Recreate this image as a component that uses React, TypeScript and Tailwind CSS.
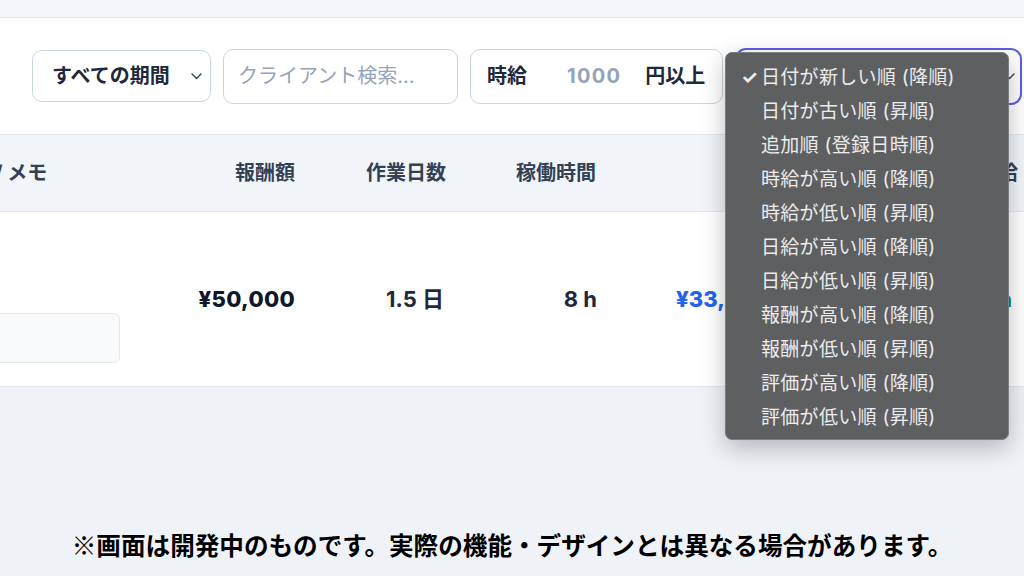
import React from "react";

const font = { fontFamily: '"Inter", "Noto Sans CJK JP", "Noto Sans", sans-serif' };

const items = [
  "日付が新しい順 (降順)",
  "日付が古い順 (昇順)",
  "追加順 (登録日時順)",
  "時給が高い順 (降順)",
  "時給が低い順 (昇順)",
  "日給が高い順 (降順)",
  "日給が低い順 (昇順)",
  "報酬が高い順 (降順)",
  "報酬が低い順 (昇順)",
  "評価が高い順 (降順)",
  "評価が低い順 (昇順)",
];

function Chevron({ className }: { className?: string }) {
  return (
    <svg className={className} width="11" height="7" viewBox="0 0 11 7" fill="none">
      <path d="M1 1l4.5 4.5L10 1" stroke="#334155" strokeWidth="1.4" strokeLinecap="round" strokeLinejoin="round" />
    </svg>
  );
}

export default function App() {
  return (
    <div className="relative w-[1024px] h-[576px] overflow-hidden bg-[#eff2f7]" style={font}>
      <div className="h-[18px] bg-[#f5f7fa] border-b border-[#e2e8f0]" />
      <div className="bg-white">
        <div className="h-[116px] flex items-center pl-[32px] gap-3">
          <div className="w-[179px] h-[52px] rounded-[10px] border border-[#cbd5e1] flex items-center pl-[19px] pr-[8px] justify-between">
            <span className="text-[20px] font-bold text-[#1e293b]">すべての期間</span>
            <Chevron />
          </div>
          <div className="w-[235px] h-[55px] rounded-[10px] border border-[#cbd5e1] flex items-center pl-[14px]">
            <span className="text-[20px] text-[#94a3b8]">クライアント検索...</span>
          </div>
          <div className="w-[253px] h-[55px] rounded-[10px] border border-[#cbd5e1] flex items-center pl-[16px]">
            <span className="text-[20px] font-bold text-[#1e293b]">時給</span>
            <span className="ml-[40px] text-[20px] font-bold text-[#94a3b8] tracking-[1.3px]">1000</span>
            <span className="ml-[24px] text-[20px] font-bold text-[#1e293b]">円以上</span>
          </div>
          <div className="w-[287px] h-[57px] rounded-[11px] border-2 border-[#5b5fe3] flex items-center justify-end pr-[5px]">
            <Chevron />
          </div>
        </div>
        <div className="h-[78px] bg-[#f1f5f9] border-y border-[#e2e8f0] flex items-center text-[20px] font-bold text-[#334155]">
          <div className="w-[150px] overflow-hidden whitespace-nowrap">
            <span className="ml-[-50px] inline-block">案件 / メモ</span>
          </div>
          <div className="w-[145px] text-right">報酬額</div>
          <div className="w-[151px] text-right">作業日数</div>
          <div className="w-[150px] text-right">稼働時間</div>
          <div className="w-[180px] text-right">時給</div>
          <div className="w-[242px] text-right">日給</div>
        </div>
        <div className="h-[175px] border-b border-[#e2e8f0] flex items-center relative">
          <div className="w-[150px] h-full relative">
            <div className="absolute left-[-20px] top-[101px] w-[140px] h-[50px] rounded-[6px] border border-[#e2e8f0] bg-[#f8fafc]" />
          </div>
          <div className="w-[145px] text-right text-[22px] font-extrabold text-[#0f172a] tracking-[0.3px]">¥50,000</div>
          <div className="w-[149px] text-right text-[22px] font-bold text-[#1e293b]">1.5 日</div>
          <div className="w-[153px] text-right text-[22px] font-bold text-[#1e293b]">8 h</div>
          <div className="w-[180px] pl-[79px] text-[22px] font-extrabold text-[#2563eb]">¥33,333</div>
          <div className="w-[241px] text-right text-[22px] font-extrabold text-[#059669] pr-[6px]">¥50,000/h</div>
        </div>
      </div>

      {/* native dropdown menu */}
      <div className="absolute left-[725px] top-[52px] w-[284px] h-[388px] rounded-[7px] bg-[#5e5f61] border border-[#7c7d80] shadow-[0_8px_24px_rgba(0,0,0,0.25)] pt-[8px]">
        {items.map((t, i) => (
          <div key={t} className="h-[34px] flex items-center text-[19px] text-[#ececec] whitespace-nowrap tracking-[0.3px]">
            <span className="w-[35px] pl-[15px] text-[19px] font-bold">{i === 0 ? "✓" : ""}</span>
            <span>{t}</span>
          </div>
        ))}
      </div>

      <div className="absolute left-0 right-0 top-[526px] text-center text-[24.6px] font-bold text-black" style={{ fontFamily: '"Noto Sans CJK JP", sans-serif' }}>
        ※画面は開発中のものです。実際の機能・デザインとは異なる場合があります。
      </div>
    </div>
  );
}
